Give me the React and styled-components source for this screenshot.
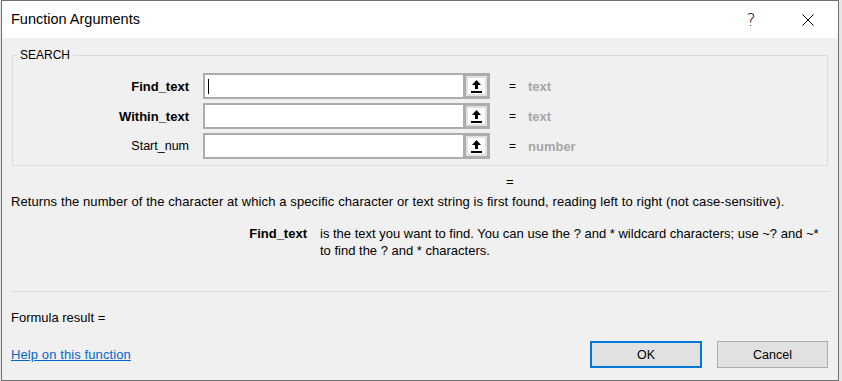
import React from 'react';
import styled, { createGlobalStyle } from 'styled-components';

const GlobalStyle = createGlobalStyle`
  html, body {
    margin: 0;
    padding: 0;
    background: #e6e6e6;
  }
  body {
    font-family: 'Liberation Sans', Arial, sans-serif;
    font-size: 12px;
    color: #000;
  }
`;

const Dialog = styled.div`
  box-sizing: border-box;
  width: 838px;
  height: 381px;
  margin-left: 1px;
  border: 1px solid #707070;
  background: #f0f0f0;
  display: flex;
  flex-direction: column;
`;

const TitleBar = styled.div`
  height: 37px;
  flex-shrink: 0;
  background: #fff;
  display: flex;
  align-items: center;
  padding-left: 9px;
`;

const Title = styled.div`
  flex: 1;
  font-size: 14.5px;
  padding-bottom: 1px;
`;

const TitleButton = styled.div`
  width: ${p => p.$w}px;
  height: 37px;
  display: flex;
  align-items: center;
  justify-content: center;
  font-size: 17px;
  font-family: 'DejaVu Sans', sans-serif;
  font-weight: 300;
`;

const Body = styled.div`
  flex: 1;
  display: flex;
  flex-direction: column;
  padding: 10px 10px 0 9px;
`;

const Group = styled.fieldset`
  margin: 0 0 0 1px;
  padding: 11px 0 6px 0;
  border: 1px solid #dcdcdc;
  min-width: 0;
`;

const Legend = styled.legend`
  margin-left: 4px;
  padding: 0 3px 0 3px;
  font-size: 12px;
  line-height: 14px;
`;

const ArgGrid = styled.div`
  display: grid;
  grid-template-columns: 190px 260px 27px 38px 1fr;
  grid-auto-rows: 26px;
  row-gap: 4px;
  align-items: center;
`;

const ArgLabel = styled.div`
  text-align: right;
  padding-right: 14px;
  font-size: ${p => (p.$bold ? '13px' : '12.5px')};
  font-weight: ${p => (p.$bold ? 700 : 400)};
`;

const ArgInput = styled.div`
  box-sizing: border-box;
  height: 26px;
  background: #fff;
  border: 2px solid #adadad;
  border-right: none;
  display: flex;
  align-items: center;
  padding-left: 3px;
`;

const Caret = styled.span`
  width: 1px;
  height: 15px;
  background: #000;
`;

const RefButton = styled.div`
  box-sizing: border-box;
  height: 26px;
  border: 3px solid #adadad;
  background: #e1e1e1;
  display: flex;
  align-items: center;
  justify-content: center;
`;

const RefInner = styled.div`
  width: 17px;
  height: 16px;
  background: #fff;
  display: flex;
  align-items: center;
  justify-content: center;
`;

const Equals = styled.div`
  padding-left: 19px;
  font-size: 12px;
`;

const ArgValue = styled.div`
  font-size: 13px;
  font-weight: 700;
  color: #a6a6a6;
`;

const TextLine = styled.div`
  font-size: 13px;
  line-height: 16px;
  letter-spacing: ${p => p.$spacing || 0}px;
  margin-top: ${p => p.$top}px;
  padding-left: ${p => p.$indent || 0}px;
`;

const Detail = styled.div`
  margin-top: 15px;
  display: grid;
  grid-template-columns: 296px 504px;
  column-gap: 13px;
  font-size: 13px;
  line-height: 17px;
`;

const DetailLabel = styled.div`
  text-align: right;
  font-weight: 700;
`;

const Separator = styled.div`
  margin-top: 32px;
  margin-right: -2px;
  border-top: 1px solid #dcdcdc;
`;

const Footer = styled.div`
  margin-top: 15px;
  display: flex;
  align-items: center;
  gap: 15px;
`;

const HelpLink = styled.a`
  flex: 1;
  font-size: 13px;
  letter-spacing: 0.1px;
  color: #0066cc;
  text-decoration: underline;
  cursor: pointer;
`;

const Button = styled.button`
  box-sizing: border-box;
  width: ${p => (p.$primary ? 112 : 111)}px;
  height: 27px;
  background: #e1e1e1;
  border: ${p => (p.$primary ? '2px solid #0078d7' : '1px solid #adadad')};
  font-family: inherit;
  font-size: 12.5px;
  color: #000;
  padding: 0;
`;

const UpArrow = () => (
  <svg width="11" height="13" viewBox="0 0 11 13">
    <path d="M5.5 0 L10 5 L7 5 L7 9 L4 9 L4 5 L1 5 Z" fill="#000" />
    <rect x="0" y="11" width="11" height="2" fill="#000" />
  </svg>
);

const CloseIcon = () => (
  <svg width="12" height="12" viewBox="0 0 12 12">
    <path d="M0.5 0.5 L11.5 11.5 M11.5 0.5 L0.5 11.5" stroke="#000" strokeWidth="1" />
  </svg>
);

const args = [
  { name: 'Find_text', bold: true, value: 'text', focused: true },
  { name: 'Within_text', bold: true, value: 'text' },
  { name: 'Start_num', bold: false, value: 'number' },
];

const App = () => {
  return (
    <>
      <GlobalStyle />
      <Dialog>
        <TitleBar>
          <Title>Function Arguments</Title>
          <TitleButton $w={54}>?</TitleButton>
          <TitleButton $w={60}><CloseIcon /></TitleButton>
        </TitleBar>
        <Body>
          <Group>
            <Legend>SEARCH</Legend>
            <ArgGrid>
              {args.map(arg => (
                <React.Fragment key={arg.name}>
                  <ArgLabel $bold={arg.bold}>{arg.name}</ArgLabel>
                  <ArgInput>{arg.focused && <Caret />}</ArgInput>
                  <RefButton>
                    <RefInner><UpArrow /></RefInner>
                  </RefButton>
                  <Equals>=</Equals>
                  <ArgValue>{arg.value}</ArgValue>
                </React.Fragment>
              ))}
            </ArgGrid>
          </Group>
          <TextLine $top={8} $indent={495}>=</TextLine>
          <TextLine $top={4} $spacing={0.1}>
            Returns the number of the character at which a specific character or text string is first found, reading left to right (not case-sensitive).
          </TextLine>
          <Detail>
            <DetailLabel>Find_text</DetailLabel>
            <div>
              is the text you want to find. You can use the ? and * wildcard characters; use ~? and ~* to find the ? and * characters.
            </div>
          </Detail>
          <Separator />
          <TextLine $top={18}>Formula result =</TextLine>
          <Footer>
            <HelpLink>Help on this function</HelpLink>
            <Button $primary>OK</Button>
            <Button>Cancel</Button>
          </Footer>
        </Body>
      </Dialog>
    </>
  );
};

export default App;
